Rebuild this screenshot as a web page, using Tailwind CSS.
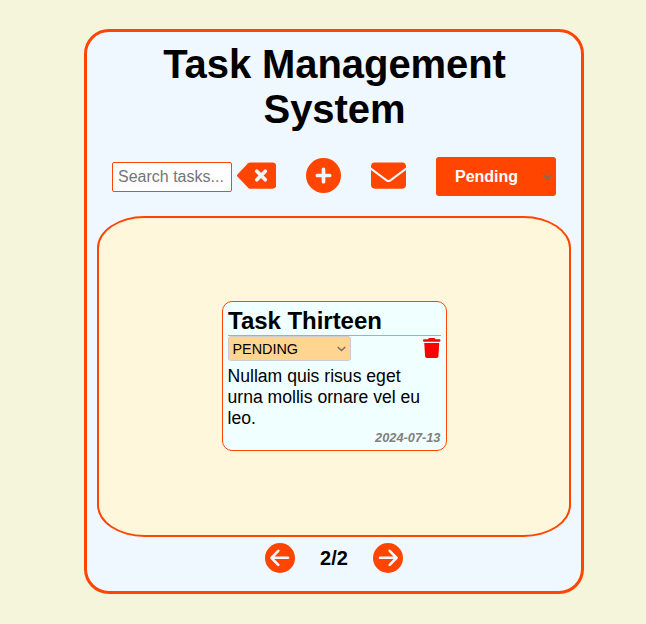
<!DOCTYPE html>
<html lang="en">
<head>
<meta charset="utf-8">
<title>Task Management System</title>
<script src="https://cdn.jsdelivr.net/npm/@tailwindcss/browser@4"></script>
</head>
<body class="bg-[#f5f5dc] text-black font-['Liberation_Sans',Arial,sans-serif] h-[624px] overflow-hidden pt-[29px] pl-[84px]">
<main class="w-[500px] h-[565px] box-border border-3 border-[#ff4500] rounded-[25px] bg-[#f0f8ff] px-[10px] pt-[10px] flex flex-col">
  <h1 class="text-[40px] leading-[45px] font-bold text-center h-[90px] pl-[41px] pr-10 tracking-[-0.08px]">Task Management System</h1>
  <div class="mt-[25px] h-[39px] pl-[15px] flex items-center">
    <input type="text" placeholder="Search tasks..." class="w-[120px] h-[30px] border border-[#ff4500] rounded-[2px] bg-white px-[5px] text-[16px] placeholder:text-[#757575]">
    <svg class="ml-[5px] mb-[2px] w-[39.4px] h-[35px] shrink-0" viewBox="0 0 576 512" fill="#ff4500"><path d="M576 120c0-31-25-56-56-56H192c-12 0-22 5-30 13L6 240c-8 9-8 23 0 32L162 435c8 8 18 13 30 13H520c31 0 56-25 56-56V120z"/><path d="M290 194l124 124M414 194L290 318" stroke="#f0f8ff" stroke-width="54" stroke-linecap="round"/></svg>
    <svg class="ml-[29.600px] mb-[2px] w-[35px] h-[35px] shrink-0" viewBox="0 0 512 512" fill="#ff4500"><circle cx="256" cy="256" r="256"/><path d="M256 166v180M166 256h180" stroke="#f0f8ff" stroke-width="54" stroke-linecap="round"/></svg>
    <svg class="ml-[30px] mb-[2px] w-[35px] h-[35px] shrink-0" viewBox="0 0 512 512" fill="#ff4500"><rect x="0" y="64" width="512" height="384" rx="56"/><path d="M-10 150L228 328Q256 347 284 328L522 150" fill="none" stroke="#f0f8ff" stroke-width="30"/></svg>
    <button class="ml-[30px] w-[120px] h-[39px] bg-[#ff4500] rounded-[3px] pl-[19px] pr-[4px] flex items-center justify-between text-white text-[16px] font-bold">
      <span>Pending</span>
      <svg class="w-[9px] h-[6px]" viewBox="0 0 9 6" fill="none" stroke="#7d6c5c" stroke-width="1.700"><path d="M0.700 1L4.500 4.500L8.300 1"/></svg>
    </button>
  </div>
  <section class="mt-[20px] h-[321px] border-2 border-[#ff4500] rounded-[10%] bg-[#fff7dc] flex justify-center">
    <article class="mt-[83px] w-[225px] h-[150px] border border-[#ff4500] rounded-[10px] bg-[#f0ffff] px-[5px] pt-[5px] flex flex-col">
      <h2 class="h-[29px] pl-[0.600px] text-[24px] leading-[28px] font-bold tracking-[-0.04px] border-b border-[#ffa500]">Task Thirteen</h2>
      <div class="flex justify-between items-start h-[30px]">
        <button class="w-[123px] h-[25px] bg-[#ffd591] border border-[#cccccc] rounded-[3px] pl-[4px] pr-[4px] flex items-center justify-between text-[14.400px]">
          <span class="pt-[2px]">PENDING</span>
          <svg class="w-[9px] h-[6px]" viewBox="0 0 9 6" fill="none" stroke="#7d6c5c" stroke-width="1.500"><path d="M0.700 1L4.500 4.500L8.300 1"/></svg>
        </button>
        <svg class="mt-[2px] w-[17.500px] h-[20px]" viewBox="0 0 448 512" fill="#ff0000"><path d="M135.200 17.700L128 32H32C14.300 32 0 46.300 0 64S14.300 96 32 96H416c17.700 0 32-14.300 32-32s-14.300-32-32-32H320l-7.200-14.300C307.400 6.800 296.300 0 284.200 0H163.800c-12.100 0-23.200 6.800-28.600 17.700zM416 128H32L53.200 467c1.600 25.300 22.600 45 47.900 45H346.900c25.300 0 46.300-19.700 47.900-45L416 128z"/></svg>
      </div>
      <p class="text-[17.600px] leading-[21px] h-[63px]">Nullam quis risus eget urna mollis ornare vel eu leo.</p>
      <time class="text-right text-[12.800px] leading-[17px] italic font-bold text-[#808080]">2024-07-13</time>
    </article>
  </section>
  <nav class="mt-[6px] h-[30px] flex items-center justify-center gap-[25px]">
    <svg class="w-[30px] h-[30px]" viewBox="0 0 30 30"><circle cx="15" cy="15" r="15" fill="#ff4500"/><path d="M13.300 7.800L6.400 14.800L13.300 21.800M6.800 14.800H23" fill="none" stroke="#f0f8ff" stroke-width="2.600" stroke-linecap="round" stroke-linejoin="round"/></svg>
    <span class="text-[20px] leading-[23px] font-bold">2/2</span>
    <svg class="w-[30px] h-[30px]" viewBox="0 0 30 30"><circle cx="15" cy="15" r="15" fill="#ff4500"/><path d="M16.700 7.800L23.600 14.800L16.700 21.800M23.200 14.800H7" fill="none" stroke="#f0f8ff" stroke-width="2.600" stroke-linecap="round" stroke-linejoin="round"/></svg>
  </nav>
</main>
</body>
</html>
